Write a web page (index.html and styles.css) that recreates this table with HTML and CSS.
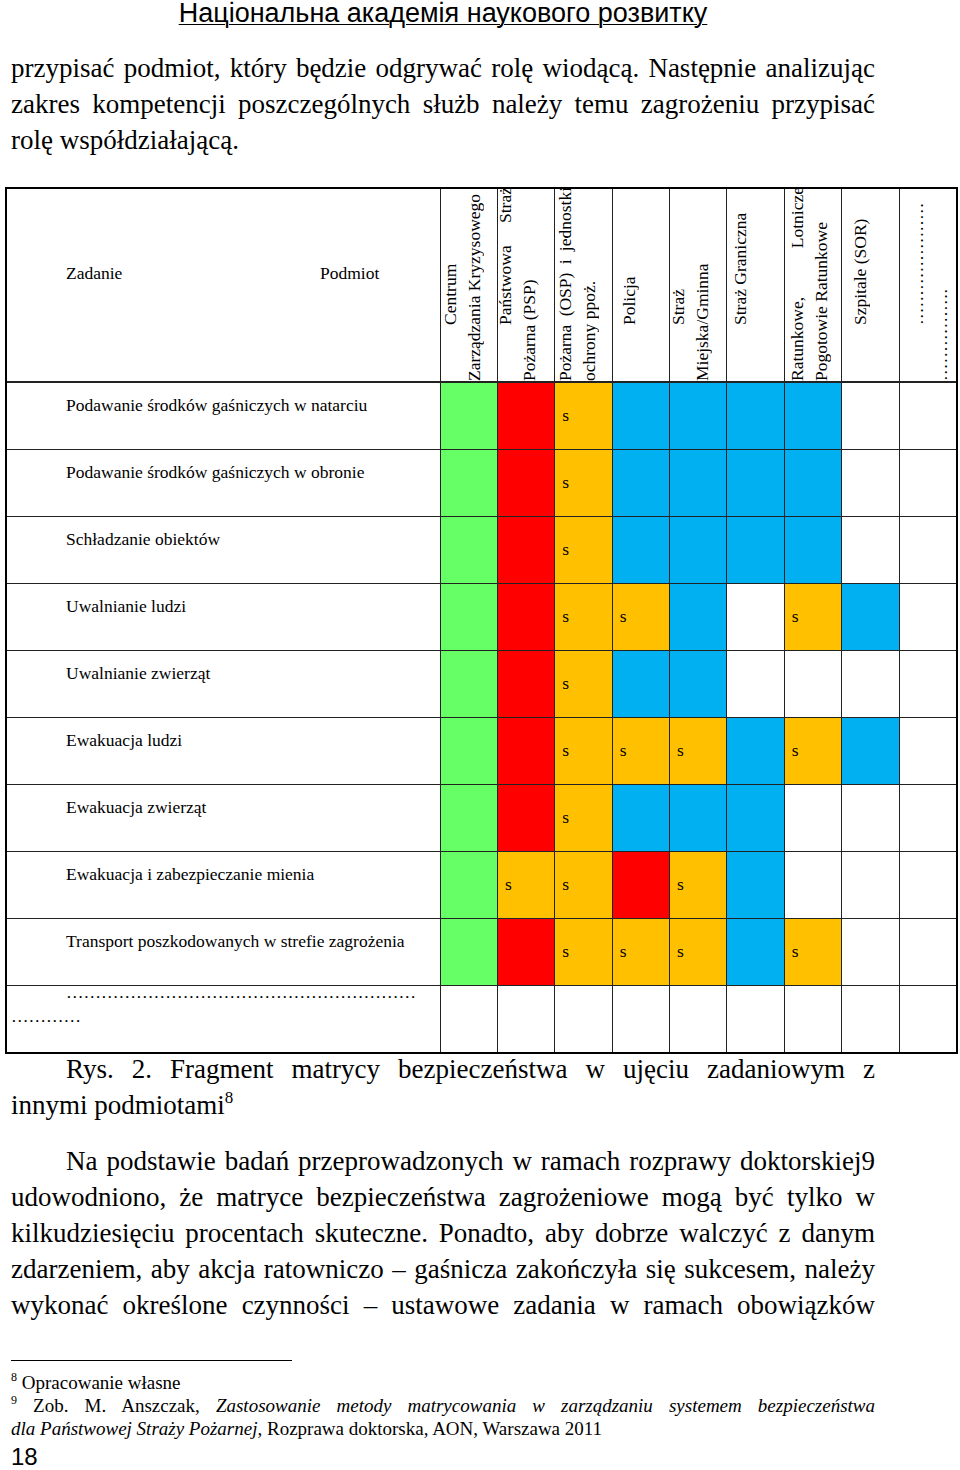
FILE: index.html
```html
<!DOCTYPE html>
<html lang="pl">
<head>
<meta charset="utf-8">
<title>Matryca bezpieczeństwa</title>
<link rel="stylesheet" href="styles.css">
</head>
<body>
<div class="page">
  <div class="runhead"><span class="runhead-text">Національна академія наукового розвитку</span></div>

  <div class="para p1">
    <div class="ln j">przypisać podmiot, który będzie odgrywać rolę wiodącą. Następnie analizując</div>
    <div class="ln j">zakres kompetencji poszczególnych służb należy temu zagrożeniu przypisać</div>
    <div class="ln">rolę współdziałającą.</div>
  </div>

  <div class="matrix">
    <div class="hd-left"><span class="h-zad">Zadanie</span><span>Podmiot</span></div>
    <div class="rh"><div class="rh-in n2 c1"><span class="l ind">Centrum</span><span class="l">Zarządzania Kryzysowego</span></div></div>
    <div class="rh"><div class="rh-in n2 c2"><span class="l ind j">Państwowa Straż</span><span class="l">Pożarna (PSP)</span></div></div>
    <div class="rh"><div class="rh-in n2 c3"><span class="l j">Pożarna (OSP) i jednostki</span><span class="l">ochrony ppoż.</span></div></div>
    <div class="rh"><div class="rh-in n1 c4"><span class="l ind">Policja</span></div></div>
    <div class="rh"><div class="rh-in n2 c5"><span class="l ind">Straż</span><span class="l">Miejska/Gminna</span></div></div>
    <div class="rh"><div class="rh-in n1 c6"><span class="l ind">Straż Graniczna</span></div></div>
    <div class="rh"><div class="rh-in n2 c7"><span class="l j">Ratunkowe, Lotnicze</span><span class="l">Pogotowie Ratunkowe</span></div></div>
    <div class="rh"><div class="rh-in n1 c8"><span class="l ind">Szpitale (SOR)</span></div></div>
    <div class="rh"><div class="rh-in n2 c9"><span class="l ind">&hellip;&hellip;&hellip;&hellip;&hellip;&hellip;&hellip;</span><span class="l">&hellip;&hellip;&hellip;&hellip;&hellip;.</span></div></div>

    <div class="task">Podawanie środków gaśniczych w natarciu</div>
    <div class="c g"></div><div class="c r"></div><div class="c o">s</div><div class="c b"></div><div class="c b"></div><div class="c b"></div><div class="c b"></div><div class="c"></div><div class="c"></div>

    <div class="task">Podawanie środków gaśniczych w obronie</div>
    <div class="c g"></div><div class="c r"></div><div class="c o">s</div><div class="c b"></div><div class="c b"></div><div class="c b"></div><div class="c b"></div><div class="c"></div><div class="c"></div>

    <div class="task">Schładzanie obiektów</div>
    <div class="c g"></div><div class="c r"></div><div class="c o">s</div><div class="c b"></div><div class="c b"></div><div class="c b"></div><div class="c b"></div><div class="c"></div><div class="c"></div>

    <div class="task">Uwalnianie ludzi</div>
    <div class="c g"></div><div class="c r"></div><div class="c o">s</div><div class="c o">s</div><div class="c b"></div><div class="c"></div><div class="c o">s</div><div class="c b"></div><div class="c"></div>

    <div class="task">Uwalnianie zwierząt</div>
    <div class="c g"></div><div class="c r"></div><div class="c o">s</div><div class="c b"></div><div class="c b"></div><div class="c"></div><div class="c"></div><div class="c"></div><div class="c"></div>

    <div class="task">Ewakuacja ludzi</div>
    <div class="c g"></div><div class="c r"></div><div class="c o">s</div><div class="c o">s</div><div class="c o">s</div><div class="c b"></div><div class="c o">s</div><div class="c b"></div><div class="c"></div>

    <div class="task">Ewakuacja zwierząt</div>
    <div class="c g"></div><div class="c r"></div><div class="c o">s</div><div class="c b"></div><div class="c b"></div><div class="c b"></div><div class="c"></div><div class="c"></div><div class="c"></div>

    <div class="task">Ewakuacja i zabezpieczanie mienia</div>
    <div class="c g"></div><div class="c o">s</div><div class="c o">s</div><div class="c r"></div><div class="c o">s</div><div class="c b"></div><div class="c"></div><div class="c"></div><div class="c"></div>

    <div class="task">Transport poszkodowanych w strefie zagrożenia</div>
    <div class="c g"></div><div class="c r"></div><div class="c o">s</div><div class="c o">s</div><div class="c o">s</div><div class="c b"></div><div class="c o">s</div><div class="c"></div><div class="c"></div>

    <div class="task last"><div class="last-in">&hellip;&hellip;&hellip;&hellip;&hellip;&hellip;&hellip;&hellip;&hellip;&hellip;&hellip;&hellip;&hellip;&hellip;&hellip;&hellip;&hellip;&hellip;&hellip;&hellip;<br>&hellip;&hellip;&hellip;&hellip;</div></div>
    <div class="c"></div><div class="c"></div><div class="c"></div><div class="c"></div><div class="c"></div><div class="c"></div><div class="c"></div><div class="c"></div><div class="c"></div>
  </div>

  <div class="para caption">
    <div class="ln j ind">Rys. 2. Fragment matrycy bezpieczeństwa w ujęciu zadaniowym z</div>
    <div class="ln">innymi podmiotami<sup class="sup">8</sup></div>
  </div>

  <div class="para p2">
    <div class="ln j ind">Na podstawie badań przeprowadzonych w ramach rozprawy doktorskiej9</div>
    <div class="ln j">udowodniono, że matryce bezpieczeństwa zagrożeniowe mogą być tylko w</div>
    <div class="ln j">kilkudziesięciu procentach skuteczne. Ponadto, aby dobrze walczyć z danym</div>
    <div class="ln j">zdarzeniem, aby akcja ratowniczo – gaśnicza zakończyła się sukcesem, należy</div>
    <div class="ln j">wykonać określone czynności – ustawowe zadania w ramach obowiązków</div>
  </div>

  <div class="fn-rule"></div>
  <div class="fn">
    <div class="fl"><sup class="fsup">8</sup> Opracowanie własne</div>
    <div class="fl j"><sup class="fsup">9</sup> Zob. M. Anszczak, <i>Zastosowanie metody matrycowania w zarządzaniu systemem bezpieczeństwa</i></div>
    <div class="fl"><i>dla Państwowej Straży Pożarnej</i>, Rozprawa doktorska, AON, Warszawa 2011</div>
  </div>
  <div class="pagenum">18</div>
</div>
</body>
</html>
```

FILE: styles.css
```css
html, body {
  margin: 0;
  padding: 0;
  background: #ffffff;
  color: #000000;
}

body {
  font-family: "Liberation Serif", "Times New Roman", serif;
}

.page {
  width: 864px;
  padding-left: 11px;
}

/* running head */
.runhead {
  font-family: "Liberation Sans", Arial, sans-serif;
  font-size: 27px;
  line-height: 26px;
  height: 26px;
  text-align: center;
}

.runhead-text {
  text-decoration: underline;
  text-decoration-thickness: 1px;
  text-underline-offset: 2px;
}

/* body paragraphs */
.para {
  font-size: 27px;
  line-height: 36px;
}

.ln {
  white-space: nowrap;
}

.ln.j {
  white-space: normal;
  text-align: justify;
  text-align-last: justify;
}

.ln.ind {
  padding-left: 55px;
}

.p1 {
  margin-top: 24px;
}

.caption {
  margin-top: -3px;
}

.p2 {
  margin-top: 20px;
}

.sup {
  font-size: 17px;
  line-height: 0;
  vertical-align: 11px;
}

/* matrix */
.matrix {
  box-sizing: border-box;
  width: 953px;
  margin-left: -6px;
  margin-top: 29px;
  display: grid;
  grid-template-columns: 432.5px repeat(9, 1fr);
  grid-template-rows: 193px repeat(10, 66px);
  gap: 1px;
  background: #222222;
  border: 2px solid #000000;
  font-size: 17.5px;
  line-height: 24px;
}

.hd-left {
  background: #ffffff;
  margin-bottom: 1px;
  padding: 72px 0 0 59px;
  display: flex;
  white-space: nowrap;
}

.h-zad {
  width: 254px;
}

.rh {
  background: #ffffff;
  margin-bottom: 1px;
  overflow: hidden;
}

.rh-in {
  writing-mode: vertical-rl;
  transform: rotate(180deg);
  height: 194px;
  margin-top: -2px;
}

.rh-in.n1 { width: 24px; }
.rh-in.n2 { width: 48px; }

.rh-in .l {
  display: block;
  white-space: nowrap;
}

.rh-in .l.ind {
  text-indent: 56px;
}

.rh-in .l.j {
  white-space: normal;
  text-align: justify;
  text-align-last: justify;
}

.c1 { margin-left: -3px; }
.c2 { margin-left: -5px; }
.c3 { margin-left: -2px; }
.c4 { margin-left: 4px; }
.c5 { margin-left: -4px; }
.c6 { margin-left: 1px; }
.c7 { margin-left: 0px; }
.c8 { margin-left: 6px; }
.c9 { margin-left: 5px; }

.task {
  background: #ffffff;
  padding: 10px 6px 0 4px;
  text-indent: 55px;
}

.task.last {
  padding-top: 0;
}

.last-in {
  margin-top: -6px;
}

.c {
  background: #ffffff;
  padding: 20px 0 0 7px;
}

.c.g { background: #66ff66; }
.c.r { background: #ff0000; }
.c.o { background: #ffc000; }
.c.b { background: #00b0f0; }

/* footnotes */
.fn-rule {
  width: 281px;
  margin-top: 37px;
  border-top: 1px solid #000000;
}

.fn {
  margin-top: 10px;
  font-size: 19px;
  line-height: 23px;
}

.fl {
  white-space: nowrap;
}

.fl.j {
  white-space: normal;
  text-align: justify;
  text-align-last: justify;
}

.fsup {
  font-size: 12px;
  line-height: 0;
  vertical-align: 8px;
}

.pagenum {
  font-family: "Liberation Sans", Arial, sans-serif;
  font-size: 24px;
  line-height: 26px;
  margin-top: 4px;
}
```
